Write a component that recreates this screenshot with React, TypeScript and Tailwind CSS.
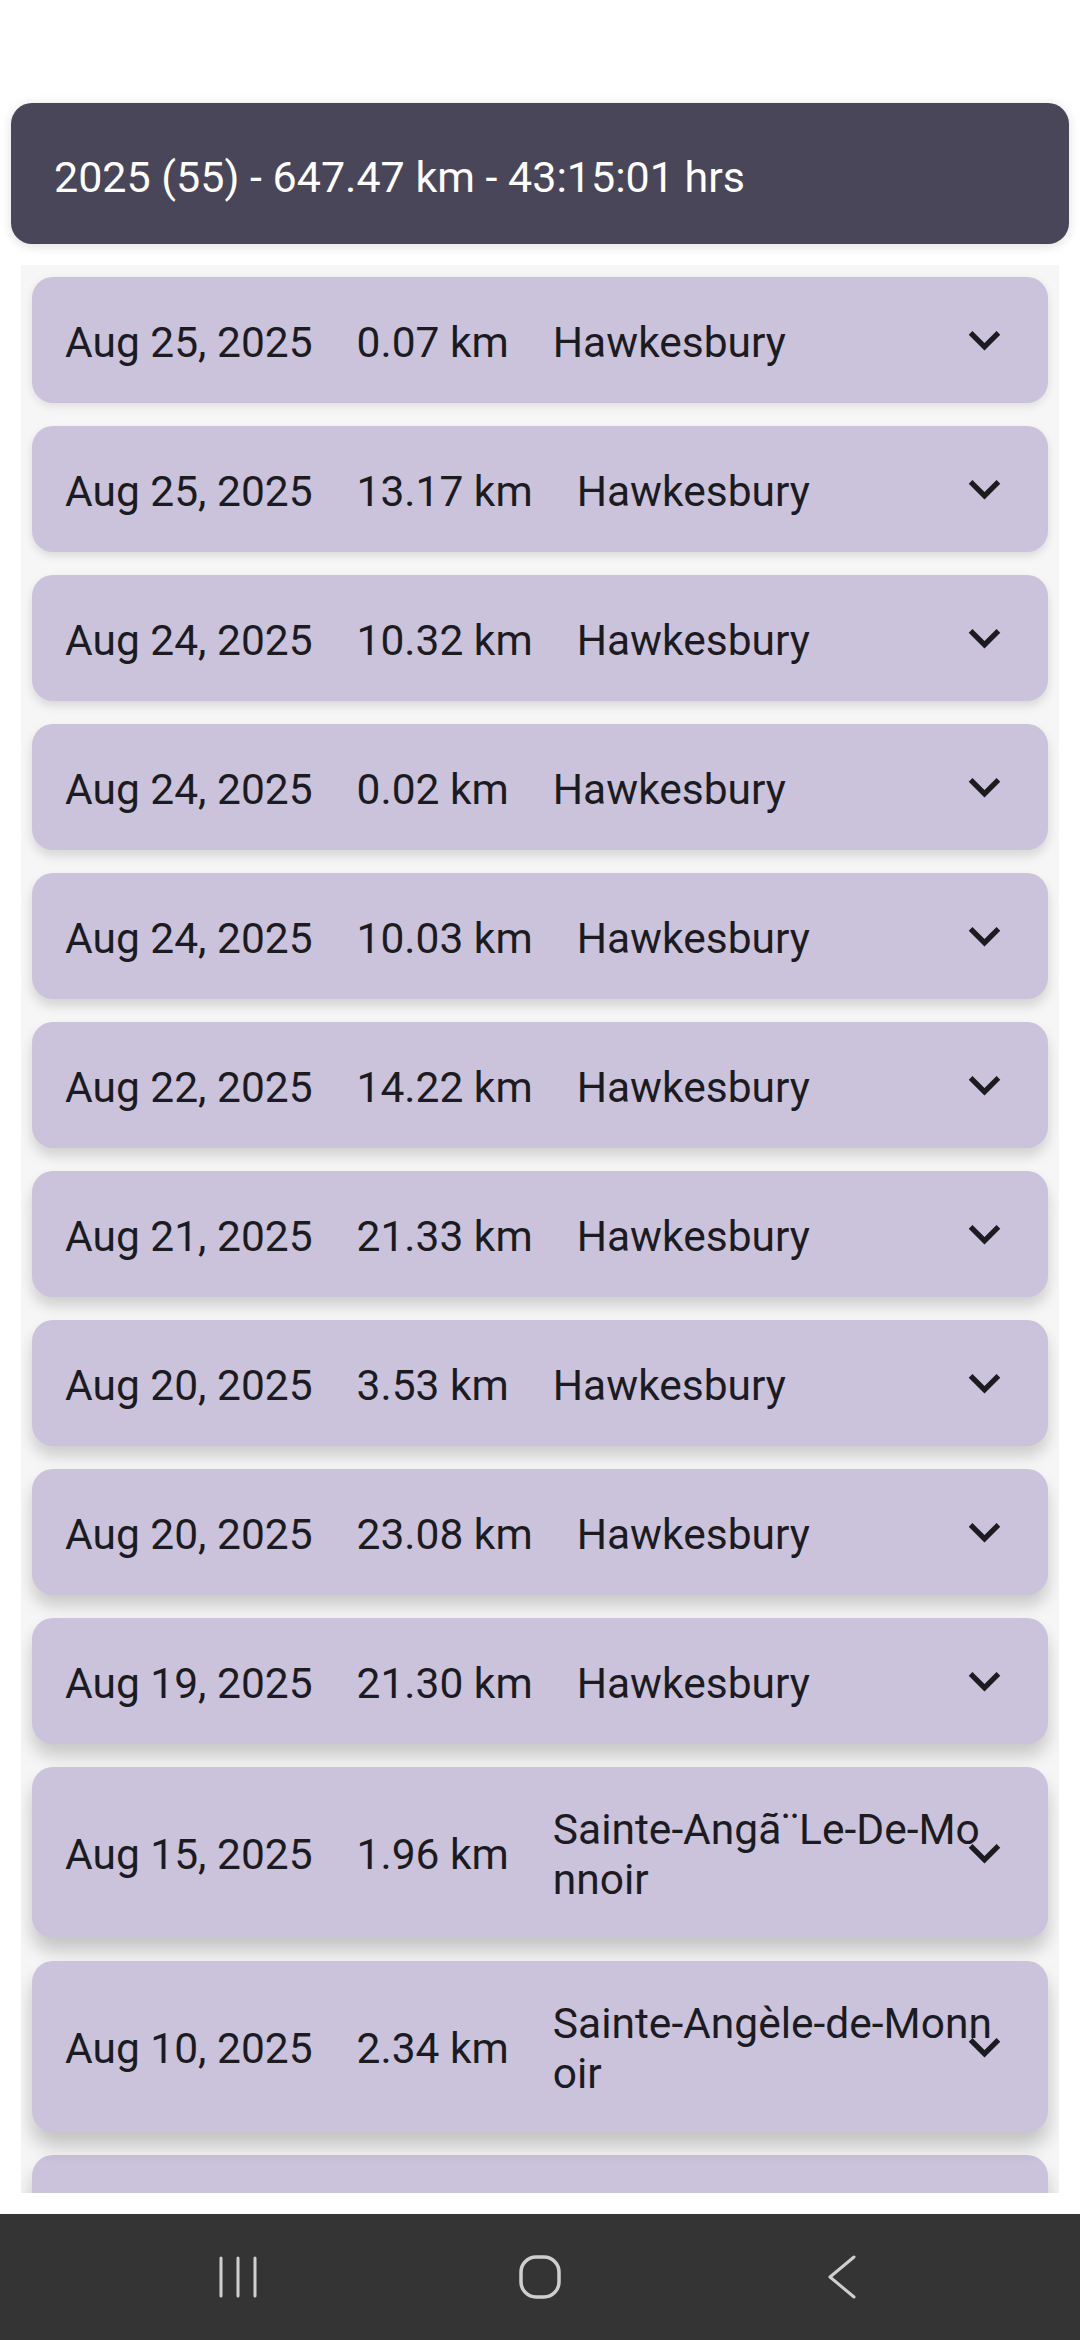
import React from "react"

interface Trip {
  date: string
  distance: string
  place: string
}

const trips: Trip[] = [
  { date: "Aug 25, 2025", distance: "0.07 km", place: "Hawkesbury" },
  { date: "Aug 25, 2025", distance: "13.17 km", place: "Hawkesbury" },
  { date: "Aug 24, 2025", distance: "10.32 km", place: "Hawkesbury" },
  { date: "Aug 24, 2025", distance: "0.02 km", place: "Hawkesbury" },
  { date: "Aug 24, 2025", distance: "10.03 km", place: "Hawkesbury" },
  { date: "Aug 22, 2025", distance: "14.22 km", place: "Hawkesbury" },
  { date: "Aug 21, 2025", distance: "21.33 km", place: "Hawkesbury" },
  { date: "Aug 20, 2025", distance: "3.53 km", place: "Hawkesbury" },
  { date: "Aug 20, 2025", distance: "23.08 km", place: "Hawkesbury" },
  { date: "Aug 19, 2025", distance: "21.30 km", place: "Hawkesbury" },
  { date: "Aug 15, 2025", distance: "1.96 km", place: "Sainte-Angã¨Le-De-Monnoir" },
  { date: "Aug 10, 2025", distance: "2.34 km", place: "Sainte-Angèle-de-Monnoir" },
]

// shadows grow toward the bottom of the screen, like elevation under a top light
const shadows = [
  "shadow-[0_3px_8px_rgba(0,0,0,0.10)]",
  "shadow-[0_4px_9px_rgba(0,0,0,0.11)]",
  "shadow-[0_5px_10px_rgba(0,0,0,0.12)]",
  "shadow-[0_6px_11px_rgba(0,0,0,0.13)]",
  "shadow-[0_7px_12px_rgba(0,0,0,0.14)]",
  "shadow-[0_8px_13px_rgba(0,0,0,0.15)]",
  "shadow-[0_9px_14px_rgba(0,0,0,0.16)]",
  "shadow-[0_10px_15px_rgba(0,0,0,0.17)]",
  "shadow-[0_11px_16px_rgba(0,0,0,0.18)]",
  "shadow-[0_12px_17px_rgba(0,0,0,0.19)]",
  "shadow-[0_13px_18px_rgba(0,0,0,0.20)]",
  "shadow-[0_14px_19px_rgba(0,0,0,0.21)]",
  "shadow-[0_15px_20px_rgba(0,0,0,0.22)]",
]

function ExpandMore() {
  return (
    <svg viewBox="0 0 24 24" className="h-[63px] w-[63px] fill-[#1c1b1f]">
      <path d="M16.59 8.59 12 13.17 7.41 8.59 6 10l6 6 6-6z" />
    </svg>
  )
}

function TripCard({ trip, index }: { trip: Trip; index: number }) {
  return (
    <div
      className={`relative flex min-h-[126px] shrink-0 items-center gap-[44px] rounded-[21px] bg-[#cac3db] pt-[38px] pb-[33px] pl-[33px] pr-[53px] text-[42.5px] leading-[50px] text-[#1c1b1f] ${shadows[index % shadows.length]}`}
    >
      <span className="whitespace-nowrap">{trip.date}</span>
      <span className="whitespace-nowrap">{trip.distance}</span>
      <span className="min-w-0 flex-1 break-all">{trip.place}</span>
      <div className="absolute right-[32px] top-1/2 -translate-y-1/2">
        <ExpandMore />
      </div>
    </div>
  )
}

function NavBar() {
  return (
    <div className="flex h-[126px] items-center justify-center gap-[202px] bg-[#343434]">
      {/* recents */}
      <div className="flex w-[100px] justify-center">
        <svg width="40" height="44" viewBox="0 0 40 44" fill="none" stroke="#cfcfcf" strokeWidth="3" strokeLinecap="round">
          <path d="M3 3v38M20 3v38M37 3v38" />
        </svg>
      </div>
      {/* home */}
      <div className="flex w-[100px] justify-center">
        <svg width="44" height="44" viewBox="0 0 44 44" fill="none" stroke="#cfcfcf" strokeWidth="3.5">
          <rect x="3" y="2" width="38" height="40" rx="15" />
        </svg>
      </div>
      {/* back */}
      <div className="flex w-[100px] justify-center">
        <svg width="30" height="46" viewBox="0 0 30 46" fill="none" stroke="#cfcfcf" strokeWidth="3" strokeLinecap="round" strokeLinejoin="round">
          <path d="M27 3 3 23l24 20" />
        </svg>
      </div>
    </div>
  )
}

export default function App() {
  return (
    <div className="flex h-[2340px] w-[1080px] flex-col overflow-hidden bg-white font-['Roboto',sans-serif]">
      <div className="flex flex-1 flex-col pt-[103px]">
        {/* summary */}
        <div className="mx-[11px] flex h-[141px] items-center rounded-[21px] bg-[#4a4659] pl-[43px] pt-[6px] text-[43px] leading-[50px] text-white shadow-[0_2px_12px_rgba(0,0,0,0.13)]">
          2025 (55) - 647.47 km - 43:15:01 hrs
        </div>

        {/* trip list, scrolled so the next row peeks in at the bottom */}
        <div className="mx-[21px] mt-[21px] flex h-[1928px] flex-col gap-[23px] overflow-hidden bg-[#f6f6f6] px-[11px] pt-[12px]">
          {trips.map((trip, i) => (
            <TripCard key={i} trip={trip} index={i} />
          ))}
          <div className={`h-[126px] shrink-0 rounded-[21px] bg-[#cac3db] ${shadows[12]}`} />
        </div>
      </div>

      <NavBar />
    </div>
  )
}
